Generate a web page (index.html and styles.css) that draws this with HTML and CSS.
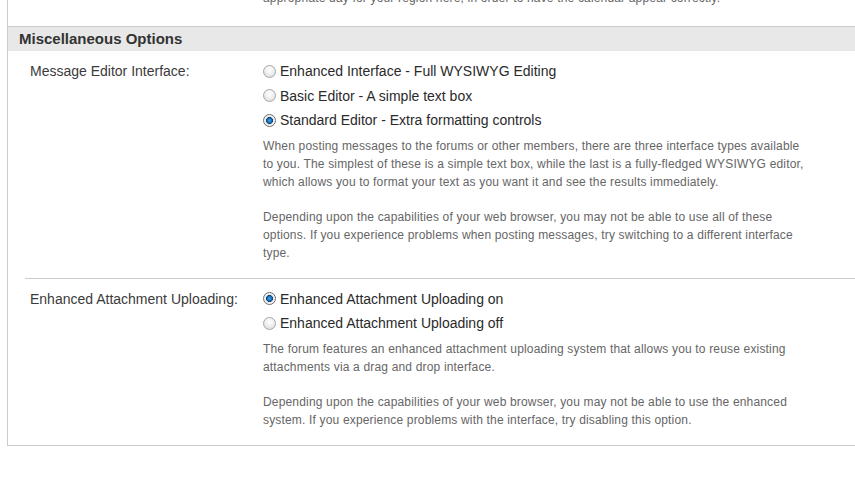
FILE: index.html
```html
<!DOCTYPE html>
<html>
<head>
<meta charset="utf-8">
<link rel="stylesheet" href="styles.css">
</head>
<body>
<div class="panel">
  <div class="prev">
    <div class="prev-inner">
      <p class="desc">appropriate day for your region here, in order to have the calendar appear correctly.</p>
    </div>
  </div>
  <div class="section-head">Miscellaneous Options</div>
  <div class="row first">
    <div class="label">Message Editor Interface:</div>
    <div class="field">
      <label class="opt"><input type="radio" name="editor"><span>Enhanced Interface - Full WYSIWYG Editing</span></label>
      <label class="opt"><input type="radio" name="editor"><span>Basic Editor - A simple text box</span></label>
      <label class="opt"><input type="radio" name="editor" checked><span>Standard Editor - Extra formatting controls</span></label>
      <div class="desc-block">
        <p class="desc">When posting messages to the forums or other members, there are three interface types available to you. The simplest of these is a simple text box, while the last is a fully-fledged WYSIWYG editor, which allows you to format your text as you want it and see the results immediately.</p>
        <p class="desc">Depending upon the capabilities of your web browser, you may not be able to use all of these options. If you experience problems when posting messages, try switching to a different interface type.</p>
      </div>
    </div>
  </div>
  <div class="row second">
    <div class="label">Enhanced Attachment Uploading:</div>
    <div class="field">
      <label class="opt"><input type="radio" name="attach" checked><span>Enhanced Attachment Uploading on</span></label>
      <label class="opt"><input type="radio" name="attach"><span>Enhanced Attachment Uploading off</span></label>
      <div class="desc-block">
        <p class="desc">The forum features an enhanced attachment uploading system that allows you to reuse existing attachments via a drag and drop interface.</p>
        <p class="desc">Depending upon the capabilities of your web browser, you may not be able to use the enhanced system. If you experience problems with the interface, try disabling this option.</p>
      </div>
    </div>
  </div>
</div>
</body>
</html>
```

FILE: styles.css
```css
html, body {
  margin: 0;
  padding: 0;
  background: #fff;
}
body {
  font-family: "Liberation Sans", Arial, sans-serif;
  color: #333;
}
.panel {
  margin-left: 7px;
  border-left: 1px solid #cccccc;
  border-bottom: 1px solid #cccccc;
}
.prev {
  height: 26px;
  overflow: hidden;
  border-bottom: 1px solid #cccccc;
}
.prev-inner {
  margin-top: -11px;
  padding-left: 255px;
}
.section-head {
  background: #e8e8e8;
  height: 24px;
  line-height: 24px;
  padding-left: 11px;
  font-size: 15px;
  font-weight: bold;
  color: #333;
}
.row {
  margin-left: 17px;
  padding-left: 5px;
  display: flex;
}
.row.first {
  padding-top: 8px;
  padding-bottom: 16px;
}
.row.second {
  border-top: 1px solid #cccccc;
  padding-top: 8px;
  padding-bottom: 16px;
}
.label {
  width: 233px;
  flex: none;
  font-size: 14px;
  line-height: 24px;
  color: #3b3b3b;
}
.field {
  flex: none;
  width: 545px;
}
.opt {
  display: flex;
  align-items: center;
  height: 24.5px;
  font-size: 14px;
  color: #2a2a2a;
}
.opt input {
  appearance: none;
  -webkit-appearance: none;
  margin: 0 4px 0 0;
  width: 13px;
  height: 13px;
  border-radius: 50%;
  border: 1px solid #a6a6a6;
  background: radial-gradient(circle at 50% 35%, #ffffff 0%, #f0f0f0 45%, #d4d4d4 100%);
  box-sizing: border-box;
  flex: none;
}
.opt input:checked {
  border-color: #6e6e6e;
  background: radial-gradient(circle at 50% 50%, #3fa6e8 0%, #1b6fb5 28%, #0b3f73 42%, #e6e6e6 48%, #f6f6f6 70%, #cfcfcf 100%);
}
.desc-block {
  margin-top: 4px;
}
.desc {
  margin: 0;
  font-size: 12px;
  letter-spacing: 0.17px;
  line-height: 18px;
  color: #666;
}
.desc + .desc {
  margin-top: 17px;
}
```
